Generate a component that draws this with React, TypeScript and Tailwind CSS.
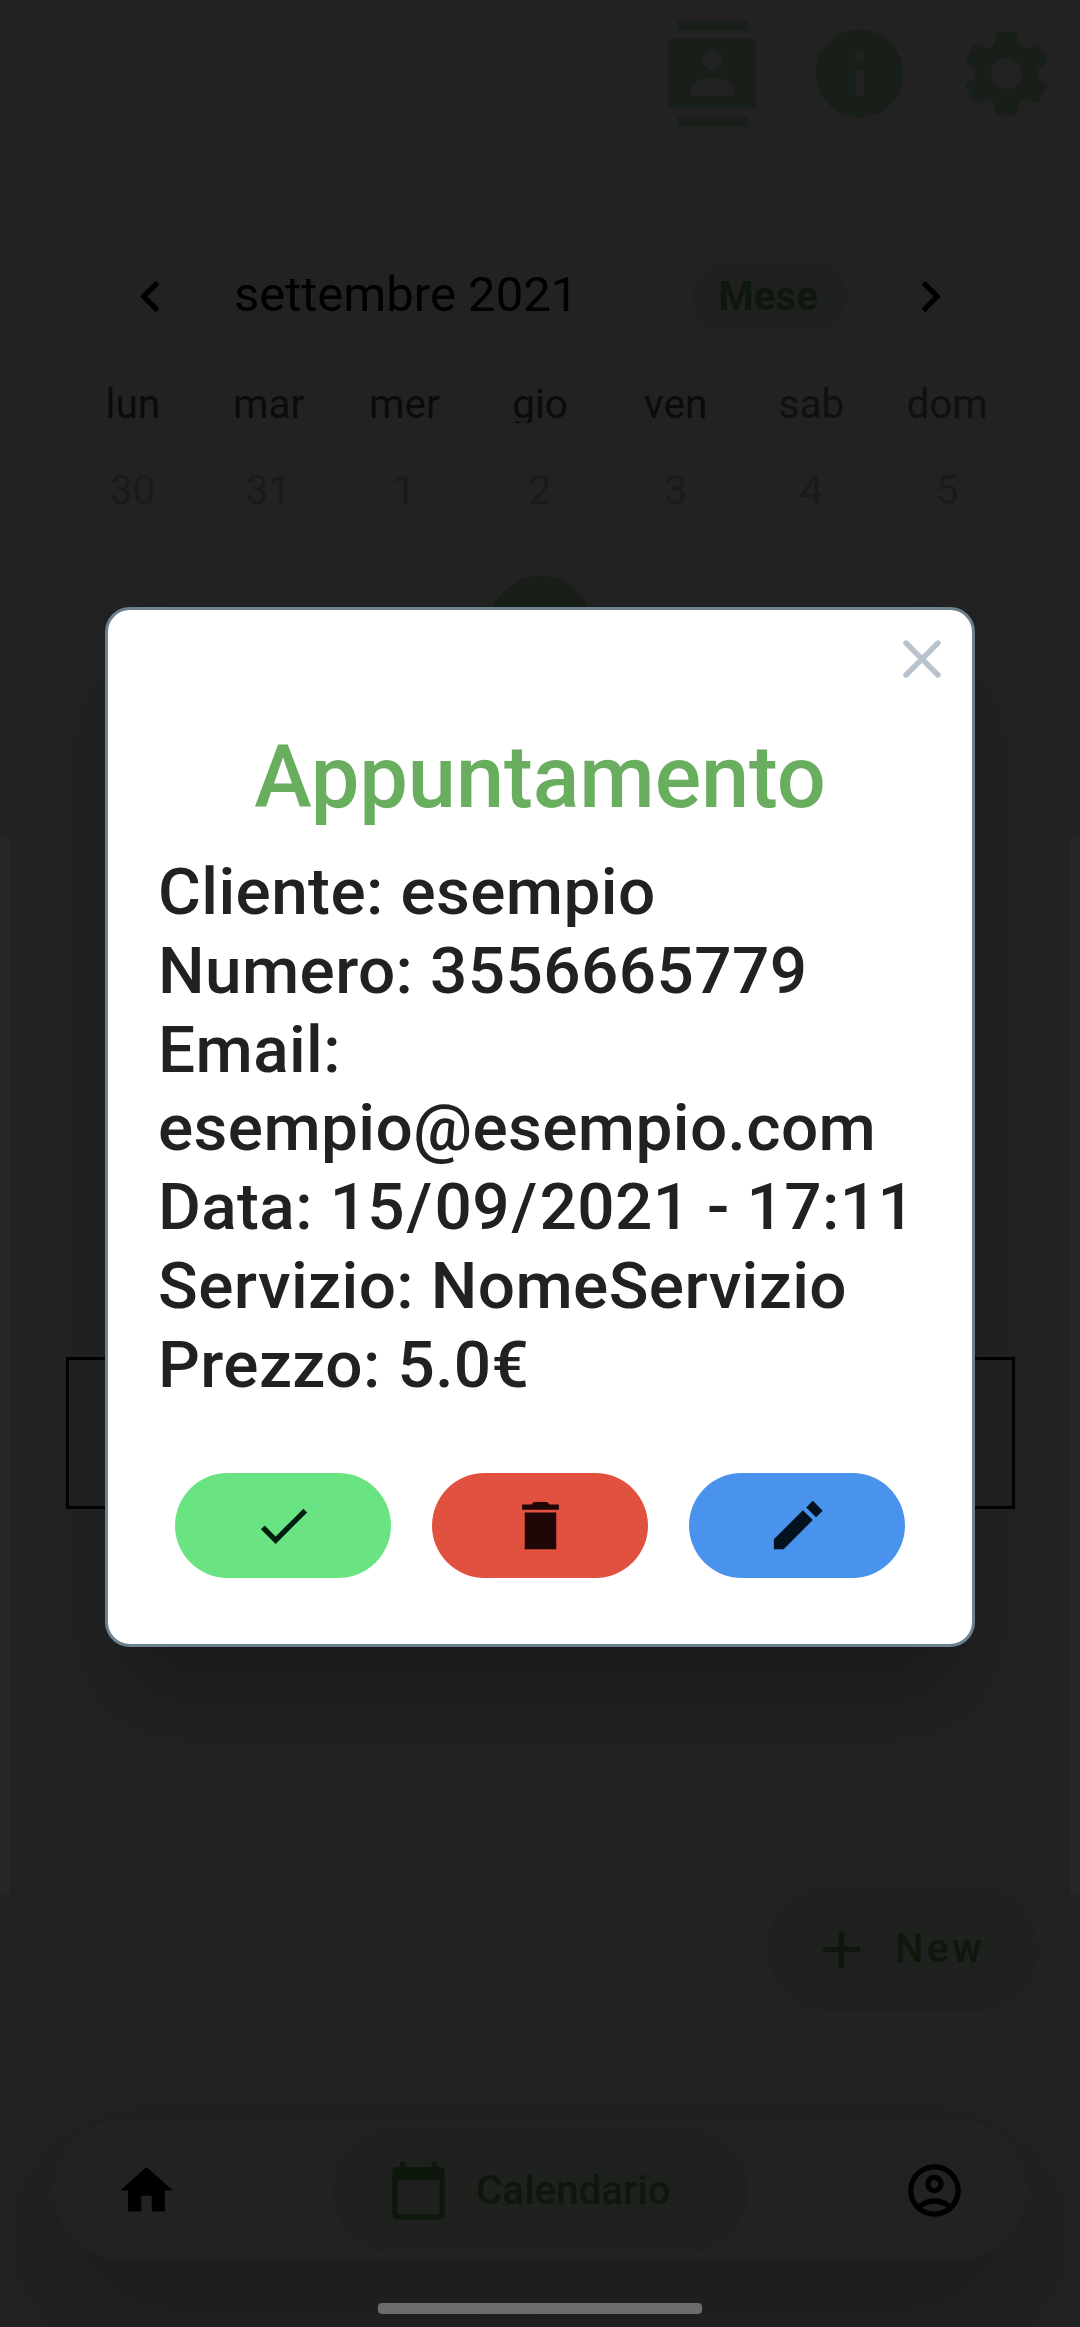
import type { ReactNode } from "react";
import {
  MdAdd,
  MdCalendarToday,
  MdCheck,
  MdChevronLeft,
  MdChevronRight,
  MdHome,
  MdInfo,
  MdOutlineAccountCircle,
  MdSettings,
} from "react-icons/md";

const WEEKDAYS = ["lun", "mar", "mer", "gio", "ven", "sab", "dom"];
const FIRST_WEEK = ["30", "31", "1", "2", "3", "4", "5"];

const Slash = () => <span className="ml-[1.5px] tracking-[2.3px]">/</span>;

const DETAILS: [string, ReactNode][] = [
  ["Cliente", "esempio"],
  ["Numero", "3556665779"],
  ["Email", "esempio@esempio.com"],
  [
    "Data",
    <>
      15
      <Slash />
      09
      <Slash />
      2021 - 17:11
    </>,
  ],
  ["Servizio", "NomeServizio"],
  ["Prezzo", "5.0€"],
];

function SharpIcon({ d, className }: { d: string; className: string }) {
  return (
    <svg viewBox="0 0 24 24" fill="currentColor" className={className}>
      <path fillRule="evenodd" d={d} />
    </svg>
  );
}

function TopBar() {
  return (
    <header className="flex h-[147px] items-center justify-end gap-[42px] pr-[21px] text-[#181e18]">
      <SharpIcon
        className="size-[105px]"
        d="M4 0h16v2H4zM4 22h16v2H4zM2 4h20v16H2zM12 6.75a2.25 2.25 0 1 0 0 4.5a2.25 2.25 0 1 0 0-4.5zM7 17h10v-1.5c0-1.67-3.33-2.5-5-2.5s-5 .83-5 2.5z"
      />
      <MdInfo className="size-[105px]" />
      <MdSettings className="size-[105px]" />
    </header>
  );
}

function Calendar() {
  return (
    <section className="mt-[115px] px-[65px]">
      <div className="flex h-[69px] items-center pl-[54px]">
        <MdChevronLeft className="size-[63px] text-black" />
        <h2 className="-mt-[3px] ml-[52px] w-[458px] text-[49px] leading-[60px] text-[#010101]">settembre 2021</h2>
        <button className="flex h-[69px] w-[155px] items-center justify-center rounded-full bg-[#1f211f] pr-[3px] text-[40.4px] font-bold leading-[46px] text-[#0d170d]">
          Mese
        </button>
        <MdChevronRight className="ml-[52px] size-[63px] text-black" />
      </div>
      <div className="mt-[53px] grid h-[39px] grid-cols-7 overflow-hidden text-center text-[40.5px] leading-[40px]">
        {WEEKDAYS.map((day, i) => (
          <span key={day} className={i > 4 ? "text-[#101010]" : "text-[#0b0b0b]"}>
            {day}
          </span>
        ))}
      </div>
      <div className="mt-[44px] grid grid-cols-7 text-center text-[40.5px] leading-[46px] text-[#1a1a1a]">
        {FIRST_WEEK.map((day) => (
          <span key={day}>{day}</span>
        ))}
      </div>
      <div className="mt-[63px] flex justify-center">
        <span className="size-[103px] rounded-full bg-[#181e18]" />
      </div>
    </section>
  );
}

function DayPanels() {
  return (
    <section className="mt-[157px] flex h-[1059px] justify-between">
      <div className="h-full w-[10px] rounded-r-[5px] bg-[#272727] shadow-[0_0_2px_#272727]" />
      <div className="mt-[521px] h-[152px] w-[949px] border-[3px] border-black" />
      <div className="h-full w-[10px] rounded-l-[5px] bg-[#272727] shadow-[0_0_2px_#272727]" />
    </section>
  );
}

function NewButton() {
  return (
    <button className="absolute right-[42px] top-[1886px] flex h-[126px] w-[270px] items-center rounded-full bg-[#1f211e] pl-[42px] text-[#0d170c]">
      <MdAdd className="size-[63px]" />
      <span className="ml-[22px] text-[40px] font-medium leading-[46px] tracking-[3.6px]">New</span>
    </button>
  );
}

function BottomNav() {
  return (
    <nav className="mx-[53px] mt-[224px] flex h-[142px] items-center justify-between rounded-full bg-[#222] pl-[62px] pr-[61px] shadow-[0_46px_130px_rgba(0,0,0,0.2)]">
      <MdHome className="size-[63px] text-black" />
      <div className="flex h-[126px] w-[415px] items-center rounded-full bg-[#1f211e] pl-[54px] text-[#0d170c]">
        <MdCalendarToday className="size-[63px]" />
        <span className="ml-[26px] mt-[2px] text-[40.4px] font-medium leading-[46px]">Calendario</span>
      </div>
      <MdOutlineAccountCircle className="size-[63px] text-black" />
    </nav>
  );
}

function ActionButton({ className, children }: { className: string; children: ReactNode }) {
  return (
    <button className={"flex h-[105px] w-[216px] items-center justify-center rounded-full " + className}>
      {children}
    </button>
  );
}

function AppointmentDialog() {
  return (
    <div className="absolute inset-x-[105px] top-[607px] flex h-[1040px] flex-col rounded-[25px] border-[3px] border-[#6c818d] bg-white px-[50px] shadow-[0_63px_88px_-17px_rgba(0,0,0,0.24)]">
      <svg
        viewBox="0 0 38 38"
        className="-mr-[19px] mt-[30px] size-[38px] self-end"
        stroke="#b9c3cd"
        strokeWidth="5.4"
        strokeLinecap="round"
      >
        <path d="M3 3L35 35M35 3L3 35" />
      </svg>
      <h1 className="mt-[48px] text-center text-[86.6px] font-medium leading-[104px] tracking-[-0.1px] text-[#69ad5f]">
        Appuntamento
      </h1>
      <div className="mt-[23px] h-[552px] text-[65.7px] font-medium leading-[78.8px] tracking-[0.4px] text-[#212121]">
        {DETAILS.map(([label, value]) => (
          <p key={label}>
            {label}: {value}
          </p>
        ))}
      </div>
      <div className="mt-[68px] flex justify-between px-[17px]">
        <ActionButton className="bg-[#6ae482] text-[#00200f]">
          <MdCheck className="size-[63px]" />
        </ActionButton>
        <ActionButton className="bg-[#e05140] text-[#1e0706]">
          <SharpIcon className="size-[63px]" d="M6 21h12V7H6zM19 4h-3.5l-1-1h-5l-1 1H5v2h14z" />
        </ActionButton>
        <ActionButton className="bg-[#4993ec] text-[#04121f]">
          <SharpIcon
            className="size-[63px]"
            d="M3 17.25V21h3.75L17.81 9.94l-3.75-3.75zM17.85 2.6L21.6 6.35l-2.53 2.53l-3.75-3.75z"
          />
        </ActionButton>
      </div>
    </div>
  );
}

export default function App() {
  return (
    <main className="relative flex h-[2327px] w-[1080px] flex-col overflow-hidden bg-[#222] font-['Roboto',sans-serif]">
      <TopBar />
      <Calendar />
      <DayPanels />
      <BottomNav />
      <div className="mx-auto mt-[42px] h-[11px] w-[324px] rounded-[4px] bg-[#6c6c6c]" />
      <NewButton />
      <AppointmentDialog />
    </main>
  );
}
